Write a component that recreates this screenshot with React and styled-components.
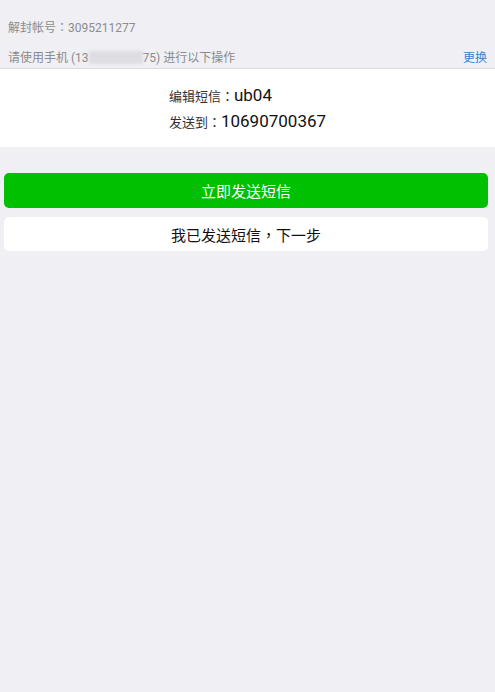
import React from "react";
import styled, { createGlobalStyle } from "styled-components";

const GlobalStyle = createGlobalStyle`
html, body {
  margin: 0;
  padding: 0;
  background: #efeff4;
  font-family: "Roboto", "Noto Sans CJK SC", sans-serif;
}
`;

const Page = styled.div`
min-height: 692px;
background: #efeff4;
`;

// centred full-width punctuation, like the Android system font
const Punct = styled.span`
font-family: "Noto Sans CJK TC", sans-serif;
`;

const Header = styled.div`
padding: 18px 8px 1px;
border-bottom: 1px solid #dcdce0;
`;

const InfoLine = styled.div`
display: flex;
align-items: center;
justify-content: space-between;
height: 18px;
line-height: 18px;
font-size: 12px;
color: #8c8c8c;
margin-bottom: ${(p) => (p.$gap ? "13px" : "0")};
`;

const Masked = styled.span`
display: inline-block;
width: 54px;
height: 13px;
vertical-align: -2px;
background: #dedee2;
filter: blur(1.5px);
`;

const Change = styled.a`
color: #3b82d6;
font-size: 12px;
text-decoration: none;
`;

const Panel = styled.div`
background: #fff;
padding: 13px 0;
text-align: center;
`;

const PanelBlock = styled.div`
display: inline-block;
text-align: left;
`;

const PanelLine = styled.div`
height: 26px;
line-height: 26px;
`;

const Label = styled.span`
font-size: 13px;
color: #333;
`;

const Value = styled.span`
font-size: 17px;
color: #111;
`;

const Actions = styled.div`
display: flex;
flex-direction: column;
gap: 9px;
padding: 26px 7px 0 4px;
`;

const Button = styled.button`
height: ${(p) => (p.$primary ? "35px" : "34px")};
border: none;
border-radius: 5px;
font-family: inherit;
font-size: 15px;
background: ${(p) => (p.$primary ? "#01bf01" : "#fff")};
color: ${(p) => (p.$primary ? "#fff" : "#111")};
`;

export default function App() {
  return (
    <Page>
      <GlobalStyle />
      <Header>
        <InfoLine $gap>
          <span>解封帐号<Punct>：</Punct>3095211277</span>
        </InfoLine>
        <InfoLine>
          <span>
            请使用手机 (13<Masked />75) 进行以下操作
          </span>
          <Change href="#">更换</Change>
        </InfoLine>
      </Header>
      <Panel>
        <PanelBlock>
          <PanelLine>
            <Label>编辑短信<Punct>：</Punct></Label>
            <Value>ub04</Value>
          </PanelLine>
          <PanelLine>
            <Label>发送到<Punct>：</Punct></Label>
            <Value>10690700367</Value>
          </PanelLine>
        </PanelBlock>
      </Panel>
      <Actions>
        <Button $primary>立即发送短信</Button>
        <Button>我已发送短信<Punct>，</Punct>下一步</Button>
      </Actions>
    </Page>
  );
}
